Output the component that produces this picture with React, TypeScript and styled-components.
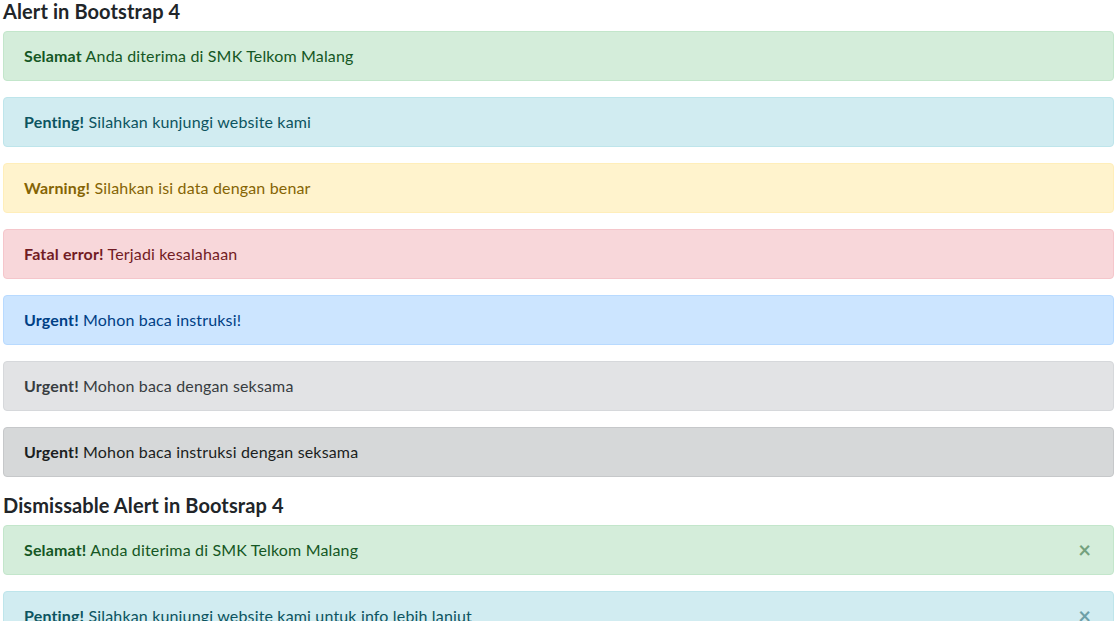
import React from "react";
import styled, { createGlobalStyle } from "styled-components";

const GlobalStyle = createGlobalStyle`
  html, body {
    margin: 0;
    padding: 0;
    background: #fff;
  }
  body {
    font-family: Lato, "Open Sans", "Liberation Sans", sans-serif;
    font-size: 16px;
    line-height: 1.5;
    color: #212529;
  }
`;

type Variant = "success" | "info" | "warning" | "danger" | "primary" | "secondary" | "dark";

const palette: Record<Variant, { color: string; bg: string; border: string }> = {
  success: { color: "#155724", bg: "#d4edda", border: "#c3e6cb" },
  info: { color: "#0c5460", bg: "#d1ecf1", border: "#bee5eb" },
  warning: { color: "#856404", bg: "#fff3cd", border: "#ffeeba" },
  danger: { color: "#721c24", bg: "#f8d7da", border: "#f5c6cb" },
  primary: { color: "#004085", bg: "#cce5ff", border: "#b8daff" },
  secondary: { color: "#383d41", bg: "#e2e3e5", border: "#d6d8db" },
  dark: { color: "#1b1e21", bg: "#d6d8d9", border: "#c6c8ca" },
};

const Container = styled.div`
  padding: 0 4px 0 3px;
  margin-top: -1px;
`;

const Heading = styled.h5`
  margin: 0 0 8px;
  font-size: 20px;
  font-weight: 700;
  line-height: 24px;
  letter-spacing: 0.1px;
  color: #212529;
`;

const Alert = styled.div<{ $variant: Variant }>`
  position: relative;
  padding: 12px 20px;
  margin-bottom: 16px;
  border: 1px solid ${(p) => palette[p.$variant].border};
  border-radius: 4px;
  background: ${(p) => palette[p.$variant].bg};
  color: ${(p) => palette[p.$variant].color};
  line-height: 24px;
  letter-spacing: 0.16px;

  strong {
    font-weight: 700;
  }
`;

const CloseButton = styled.button`
  position: absolute;
  top: 0;
  right: 0;
  padding: 12px 22px;
  border: 0;
  background: transparent;
  color: inherit;
  opacity: 0.5;
  font-family: inherit;
  font-size: 22px;
  font-weight: 700;
  line-height: 24px;
  cursor: pointer;
`;

const basic: { variant: Variant; title: string; text: string }[] = [
  { variant: "success", title: "Selamat", text: "Anda diterima di SMK Telkom Malang" },
  { variant: "info", title: "Penting!", text: "Silahkan kunjungi website kami" },
  { variant: "warning", title: "Warning!", text: "Silahkan isi data dengan benar" },
  { variant: "danger", title: "Fatal error!", text: "Terjadi kesalahaan" },
  { variant: "primary", title: "Urgent!", text: "Mohon baca instruksi!" },
  { variant: "secondary", title: "Urgent!", text: "Mohon baca dengan seksama" },
  { variant: "dark", title: "Urgent!", text: "Mohon baca instruksi dengan seksama" },
];

const dismissable: { variant: Variant; title: string; text: string }[] = [
  { variant: "success", title: "Selamat!", text: "Anda diterima di SMK Telkom Malang" },
  { variant: "info", title: "Penting!", text: "Silahkan kunjungi website kami untuk info lebih lanjut" },
  { variant: "warning", title: "Warning!", text: "Silahkan isi data dengan benar" },
];

export default function App() {
  return (
    <>
      <GlobalStyle />
      <Container>
        <Heading>Alert in Bootstrap 4</Heading>
        {basic.map((a, i) => (
          <Alert key={i} $variant={a.variant}>
            <strong>{a.title}</strong> {a.text}
          </Alert>
        ))}
        <Heading>Dismissable Alert in Bootsrap 4</Heading>
        {dismissable.map((a, i) => (
          <Alert key={i} $variant={a.variant}>
            <strong>{a.title}</strong> {a.text}
            <CloseButton type="button" aria-label="Close">
              ×
            </CloseButton>
          </Alert>
        ))}
      </Container>
    </>
  );
}
